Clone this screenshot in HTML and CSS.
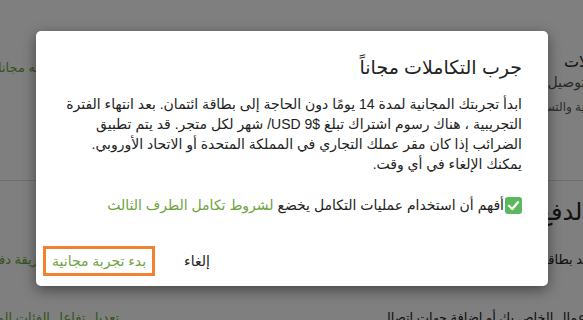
FILE: index.html
```html
<!DOCTYPE html>
<html lang="ar" dir="rtl">
<head>
<meta charset="utf-8">
<title>جرب التكاملات مجاناً</title>
<link rel="stylesheet" href="styles.css">
</head>
<body>
<div class="page">
  <section class="section section-top">
    <div class="setting">
      <div class="setting-title">التكاملات</div>
      <div class="setting-desc">يمكنك توصيل</div>
      <div class="setting-note">الإلكترونية والتسويق</div>
    </div>
    <a class="page-link trial-link">ابدأ فترة تجربه مجانا</a>
  </section>
  <section class="section section-pay">
    <h2 class="section-title">الدفع</h2>
    <div class="pay-row">
      <div class="pay-desc pay-desc-card">بعد بطاقة الائتمان</div>
      <a class="page-link pay-link">تعديل طريقة دفع</a>
    </div>
    <div class="pay-row pay-row-last">
      <div class="pay-desc pay-desc-profile">ملف الأعمال الخاص بك أو إضافة جهات اتصال</div>
      <a class="page-link cat-link">تعديل تفاعل الفئات المحفوظة</a>
    </div>
  </section>
</div>

<div class="backdrop"></div>

<div class="modal" role="dialog">
  <div class="modal-body">
    <h2 class="modal-title">جرب التكاملات مجاناً</h2>
    <p class="modal-text">ابدأ تجربتك المجانية لمدة 14 يومًا دون الحاجة إلى بطاقة ائتمان. بعد انتهاء الفترة التجريبية ، هناك رسوم اشتراك تبلغ $9 USD/ شهر لكل متجر. قد يتم تطبيق الضرائب إذا كان مقر عملك التجاري في المملكة المتحدة أو الاتحاد الأوروبي. يمكنك الإلغاء في أي وقت.</p>
    <label class="agree">
      <span class="checkbox"><svg width="17" height="17" viewBox="0 0 17 17"><polyline points="4,8.8 7.2,12 13,5.2" fill="none" stroke="#fff" stroke-width="2.3" stroke-linecap="round" stroke-linejoin="round"/></svg></span>
      <span class="agree-text">أفهم أن استخدام عمليات التكامل يخضع <a class="modal-link">لشروط تكامل الطرف الثالث</a></span>
    </label>
  </div>
  <div class="modal-footer">
    <button class="btn btn-cancel">إلغاء</button>
    <button class="btn btn-primary">بدء تجربة مجانية</button>
  </div>
</div>
</body>
</html>
```

FILE: styles.css
```css
* { box-sizing: border-box; }

html, body {
  margin: 0;
  padding: 0;
}

body {
  width: 583px;
  height: 320px;
  overflow: hidden;
  position: relative;
  direction: rtl;
  background: #ffffff;
  color: #222222;
  font-family: "Liberation Sans", "DejaVu Sans", sans-serif;
}

/* background page */
.page {
  margin-right: -6px;
}

.section-top {
  display: flex;
  justify-content: space-between;
  align-items: flex-start;
  padding-top: 52px;
  height: 181px;
  border-bottom: 1px solid #dddddd;
}

.setting {
  margin-right: -36px;
  white-space: nowrap;
}

.setting-title {
  font-size: 16px;
  line-height: 20px;
  color: #222;
}

.setting-desc {
  font-size: 14px;
  line-height: 20px;
  color: #555;
}

.setting-note {
  font-size: 12px;
  line-height: 18px;
  color: #555;
  margin-top: 6px;
}

.page-link {
  font-size: 13px;
  line-height: 20px;
  color: #6ea440;
  white-space: nowrap;
}

.trial-link {
  margin-top: 6px;
  margin-left: -2px;
}

.section-pay {
  padding-top: 16px;
}

.section-title {
  margin: 0;
  font-size: 24px;
  font-weight: normal;
  line-height: 30px;
  color: #222;
}

.pay-row {
  display: flex;
  justify-content: space-between;
  align-items: center;
  margin-top: 23px;
  font-size: 13px;
  line-height: 20px;
  white-space: nowrap;
}

.pay-row-last {
  margin-top: 38px;
}

.pay-desc {
  color: #222;
}

.pay-desc-card {
  margin-right: -4px;
}

.pay-desc-profile {
  margin-right: -36px;
}

.pay-link {
  margin-left: -8px;
}

.cat-link {
  margin-left: -42px;
}

/* overlay */
.backdrop {
  position: absolute;
  inset: 0;
  background: rgba(0, 0, 0, 0.5);
}

.modal {
  position: absolute;
  left: 36px;
  top: 31px;
  width: 512px;
  height: 255px;
  background: #ffffff;
  border-radius: 5px;
  box-shadow: 0 4px 14px rgba(0, 0, 0, 0.45);
  display: flex;
  flex-direction: column;
}

.modal-body {
  padding: 22px 26px 0 27px;
}

.modal-title {
  margin: 0;
  font-size: 19px;
  font-weight: normal;
  line-height: 30px;
  color: #222;
}

.modal-text {
  margin: 11px 0 0;
  font-size: 14px;
  line-height: 20px;
  color: #222;
}

.agree {
  display: flex;
  align-items: center;
  gap: 1px;
  margin-top: 21px;
  font-size: 14px;
  line-height: 20px;
}

.checkbox {
  width: 17px;
  height: 17px;
  border-radius: 3px;
  background: #5cb85c;
  display: flex;
  flex: none;
}

.modal-link {
  color: #6ea440;
}

.modal-footer {
  margin-top: auto;
  display: flex;
  justify-content: flex-end;
  align-items: center;
  gap: 17px;
  padding: 0 7px 10px;
}

.btn {
  font-family: inherit;
  font-size: 14px;
  line-height: 20px;
  height: 30px;
  background: transparent;
  border: none;
  padding: 0 12px;
  color: #222;
  white-space: nowrap;
}

.btn-primary {
  color: #6ea440;
  border: 3px solid #f08232;
  padding: 0 6px;
}
```
